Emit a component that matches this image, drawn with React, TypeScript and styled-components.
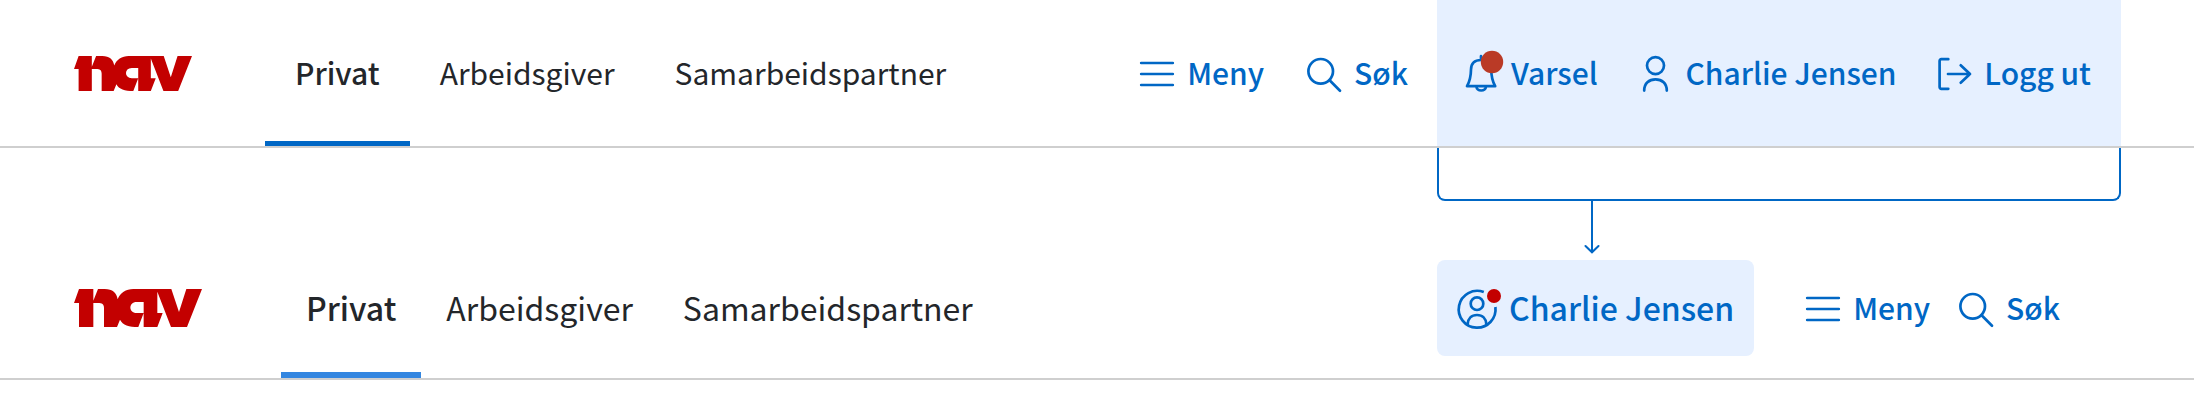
import React from "react";
import styled, { createGlobalStyle } from "styled-components";

const GlobalStyle = createGlobalStyle`
  *, *::before, *::after { box-sizing: border-box; }
  body {
    margin: 0;
    background: #fff;
    color: #23262a;
    font-family: "Noto Sans CJK SC", "Noto Sans", sans-serif;
  }
`;

type Size = "regular" | "large";

const Page = styled.main`
  min-width: 2000px;
`;

const Header = styled.header<{ $height: number }>`
  display: flex;
  align-items: stretch;
  height: ${(p) => p.$height}px;
  padding: 0 73px 0 74px;
  border-bottom: 2px solid #cfcfcf;
`;

const LogoLink = styled.a<{ $size: Size }>`
  display: flex;
  align-items: center;
  padding: ${(p) => (p.$size === "large" ? "0 0 22px" : "2px 0 0")};
  margin-right: ${(p) => (p.$size === "large" ? 79 : 73)}px;
`;

const Tabs = styled.nav`
  display: flex;
`;

const Tab = styled.a<{ $size: Size; $active?: boolean }>`
  display: flex;
  align-items: center;
  padding: 0 ${(p) => (p.$size === "large" ? 25 : 30)}px
    ${(p) => (p.$size === "large" ? 24 : 2)}px;
  font-size: ${(p) => (p.$size === "large" ? 32 : 30)}px;
  font-weight: ${(p) => (p.$active ? 500 : 400)};
  line-height: 40px;
  color: inherit;
  text-decoration: none;
  box-shadow: ${(p) =>
    p.$active
      ? p.$size === "large"
        ? "inset 0 -6px #3386e0"
        : "inset 0 -5px #0067c5"
      : "none"};
`;

const Tools = styled.div`
  display: flex;
  align-items: center;
  gap: 40px;
  margin-left: auto;
`;

const CompactTools = styled(Tools)`
  align-items: stretch;
  gap: 26px;
  width: 684px;
  height: 96px;
`;

const ToolButton = styled.button<{ $size?: Size }>`
  display: flex;
  align-items: center;
  gap: 10px;
  padding: 0 0 2px;
  border: 0;
  background: none;
  color: #0067c5;
  font-family: inherit;
  font-size: ${(p) => (p.$size === "large" ? 32 : 30)}px;
  font-weight: 500;
  line-height: 40px;
  white-space: nowrap;
  cursor: pointer;
`;

const UserPanel = styled.div`
  display: flex;
  align-items: center;
  justify-content: space-between;
  width: 684px;
  margin-left: 29px;
  padding: 0 30px 0 24px;
  background: #e6f0ff;
`;

const UserButton = styled(ToolButton)`
  gap: 12px;
  margin-right: 23px;
  padding: 0 20px 2px;
  border-radius: 8px;
  background: #e6f0ff;
`;

const Connector = styled.div`
  width: 684px;
  height: 112px;
  margin: 0 73px 0 auto;
  color: #0067c5;
`;

const Bracket = styled.div`
  height: 53px;
  border: 2px solid;
  border-top: 0;
  border-radius: 0 0 8px 8px;
`;

const Arrow = styled.svg`
  display: block;
  margin-left: 147px;
`;

const IconSvg = styled.svg`
  flex: none;
  overflow: visible;
`;

function Icon({ children }: { children: React.ReactNode }) {
  return (
    <IconSvg
      width="40"
      height="40"
      viewBox="0 -2 40 40"
      fill="none"
      stroke="currentColor"
      strokeWidth="2.7"
      strokeLinecap="round"
      strokeLinejoin="round"
      aria-hidden="true"
    >
      {children}
    </IconSvg>
  );
}

const MenuIcon = () => (
  <Icon>
    <path d="M4.2 9h31.6M4.2 20h31.6M4.2 31h31.6" />
  </Icon>
);

const SearchIcon = () => (
  <Icon>
    <circle cx="16.7" cy="17.3" r="12.3" />
    <path d="M25.6 26.2L36 36.7" />
  </Icon>
);

const BellIcon = () => (
  <Icon>
    <path d="M20 2.2V6M20 6C13.5 6 10.2 9.2 10 15.5C9.9 23 9.3 26.5 6 32.2H34.2C30.9 26.5 30.3 23 30.2 15.5C30 9.2 26.5 6 20 6Z" />
    <path d="M15.5 32.7a4.7 3.8 0 0 0 9.4 0" />
    <circle cx="31" cy="8" r="11.2" fill="#ba3a26" stroke="none" />
  </Icon>
);

const PersonIcon = () => (
  <Icon>
    <circle cx="20.5" cy="11.6" r="8.5" />
    <path d="M9.2 36.6C9.2 29.5 14 25.4 20.5 25.4S31.8 29.5 31.8 36.6" />
  </Icon>
);

const LogoutIcon = () => (
  <Icon>
    <path d="M14.3 5.2H7.3a1.7 1.7 0 0 0-1.7 1.7v26.2a1.7 1.7 0 0 0 1.7 1.7h7M14 20h22M26.7 11.3l9.3 8.7-9.3 8.7" />
  </Icon>
);

const UserCircleIcon = () => (
  <Icon>
    <path d="M26.8 3.1A18.4 18.4 0 1 0 38.4 18" strokeLinecap="butt" />
    <circle cx="20" cy="14.7" r="6.3" />
    <path d="M10.6 35.3C11 29.5 14.5 26 20 26S29 29.5 29.4 35.3" />
    <circle cx="37" cy="7" r="7" fill="#c30000" stroke="none" />
  </Icon>
);

function NavLogo({ width }: { width: number }) {
  return (
    <svg width={width} viewBox="0 0 384 114" fill="#c30000" aria-hidden="true">
      <path
        fillRule="evenodd"
        d="M15 0H58V35L72 0H92C116 0 128 12 131 31C138 12 156 0 178 0H292L315 69L337 0H384L339 114H291L250 8V72H266L250 114H209V72L193 114C165 114 146 108 138 92L129 114H90V58C90 45 84 42 72 42H58V114H15V42H0ZM209 39H188C163 39 163 72 188 72H209Z"
      />
    </svg>
  );
}

function Navigation({ size }: { size: Size }) {
  return (
    <Tabs aria-label="Hovedmeny">
      <Tab href="#privat" $size={size} $active aria-current="page">Privat</Tab>
      <Tab href="#arbeidsgiver" $size={size}>Arbeidsgiver</Tab>
      <Tab href="#samarbeidspartner" $size={size}>Samarbeidspartner</Tab>
    </Tabs>
  );
}

export default function App() {
  return (
    <Page>
      <GlobalStyle />
      <Header $height={148}>
        <LogoLink href="#nav" aria-label="Nav" $size="regular">
          <NavLogo width={118} />
        </LogoLink>
        <Navigation size="regular" />
        <Tools>
          <ToolButton type="button"><MenuIcon />Meny</ToolButton>
          <ToolButton type="button"><SearchIcon />Søk</ToolButton>
        </Tools>
        <UserPanel>
          <ToolButton type="button"><BellIcon />Varsel</ToolButton>
          <ToolButton type="button"><PersonIcon />Charlie Jensen</ToolButton>
          <ToolButton type="button"><LogoutIcon />Logg ut</ToolButton>
        </UserPanel>
      </Header>
      <Connector aria-hidden="true">
        <Bracket />
        <Arrow width="16" height="53" viewBox="0 0 16 53" fill="none" stroke="currentColor" strokeWidth="2" strokeLinecap="round">
          <path d="M8 0V51M1.5 45L8 51.3L14.5 45" />
        </Arrow>
      </Connector>
      <Header $height={120}>
        <LogoLink href="#nav" aria-label="Nav" $size="large">
          <NavLogo width={128} />
        </LogoLink>
        <Navigation size="large" />
        <CompactTools>
          <UserButton type="button" $size="large"><UserCircleIcon />Charlie Jensen</UserButton>
          <ToolButton type="button"><MenuIcon />Meny</ToolButton>
          <ToolButton type="button"><SearchIcon />Søk</ToolButton>
        </CompactTools>
      </Header>
    </Page>
  );
}
